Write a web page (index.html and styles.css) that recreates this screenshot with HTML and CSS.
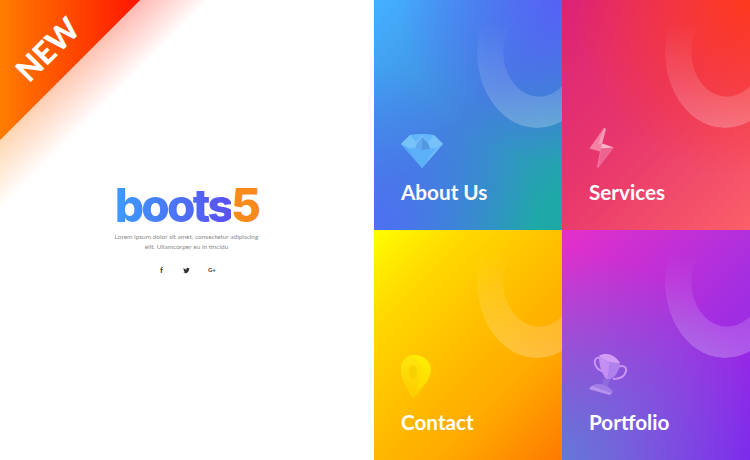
FILE: index.html
```html
<!DOCTYPE html>
<html lang="en">
<head>
  <meta charset="UTF-8">
  <meta name="viewport" content="width=device-width, initial-scale=1.0">
  <title>boots5</title>
  <link rel="stylesheet" href="styles.css">
</head>
<body>
  <div class="page">
    <div class="corner"></div>
    <span class="corner-text">NEW</span>

    <div class="intro">
      <h1 class="logo"><span class="logo-name">boots</span><span class="logo-num">5</span></h1>
      <p class="intro-text">Lorem ipsum dolor sit amet, consectetur adipiscing elit. Ullamcorper eu in tincidu</p>
      <ul class="social">
        <li class="social-f">f</li>
        <li>
          <svg class="social-bird" viewBox="0 0 24 24"><path d="M23 5.1c-.8.4-1.7.6-2.6.7.9-.6 1.6-1.4 2-2.5-.9.5-1.9.9-2.9 1.1A4.6 4.6 0 0 0 11.7 8.6C7.9 8.4 4.500 6.600 2.200 3.800c-1.200 2.100-.6 4.800 1.400 6.100-.7 0-1.400-.2-2-.6 0 2.200 1.500 4.100 3.700 4.600-.7.200-1.400.2-2.100.1.600 1.900 2.300 3.200 4.300 3.200A9.300 9.300 0 0 1 .8 19.100 13 13 0 0 0 20.900 7.500c.9-.6 1.600-1.400 2.100-2.400z"/></svg>
        </li>
        <li class="social-g">G+</li>
      </ul>
    </div>

    <div class="tiles">
      <a class="tile tile-about">
        <span class="ring"></span>
        <svg class="tile-icon" viewBox="0 0 42 34">
          <path d="M9 1c7-1.300 17-1.300 24 0l9 9-21 24L0 10z" fill="#62b6fb"/>
          <path d="M0 10l9-9 6 7 6-7 6 7 6-7 9 9-8 4-13-1-13 1z" fill="#78c2fa"/>
          <path d="M16 9l5-6 6 6 2 6-8 1-7-1z" fill="#62aaf0"/>
          <path d="M21 3l6 6 2 6-8 1z" fill="#5498e4"/>
          <path d="M0 10l8 5 13 19z" fill="#58aaf6"/>
          <path d="M42 10l-8 5-13 19z" fill="#6cbcfa"/>
          <path d="M8 15l13 1 13-1-13 19z" fill="#5cb0f8"/>
        </svg>
        <span class="tile-title">About Us</span>
      </a>
      <a class="tile tile-services">
        <span class="ring"></span>
        <svg class="tile-icon tile-icon-bolt" viewBox="0 0 26 41">
          <path d="M15 0l2 1-4 15 12 4-16 21-1-1 3-16L0 21z" fill="#f67fa4"/>
          <path d="M15 0l2 1-4 15-4 1z" fill="#f79ab8"/>
          <path d="M13 16l12 4-13 1z" fill="#fab4c9"/>
          <path d="M12 21l13-1L9 41z" fill="#ee6490"/>
        </svg>
        <span class="tile-title">Services</span>
      </a>
      <a class="tile tile-contact">
        <span class="ring"></span>
        <svg class="tile-icon tile-icon-pin" viewBox="0 0 30 43">
          <defs>
            <linearGradient id="pin-fade" x1="0" y1="0" x2="0" y2="1">
              <stop offset="0" stop-color="#ffee00"/>
              <stop offset=".6" stop-color="#ffe000"/>
              <stop offset="1" stop-color="#ffcc00"/>
            </linearGradient>
            <linearGradient id="pin-face" x1="0" y1="0" x2="0" y2="1">
              <stop offset="0" stop-color="#ffe40a"/>
              <stop offset="1" stop-color="#ffcb00"/>
            </linearGradient>
          </defs>
          <path d="M13 0c9 0 17 6 17 15 0 8-9 19-18 28C6 35 0 24 0 14 0 5 6 0 13 0z" fill="url(#pin-fade)"/>
          <path d="M9 2c6 0 11 6 11 13 0 7-3 17-8 28C6 35 0 24 0 14 0 7 4 2 9 2z" fill="url(#pin-face)"/>
          <ellipse cx="12" cy="17" rx="4" ry="7" fill="#f9d000"/>
        </svg>
        <span class="tile-title">Contact</span>
      </a>
      <a class="tile tile-portfolio">
        <span class="ring"></span>
        <svg class="tile-icon tile-icon-cup" viewBox="0 0 40 43">
          <path d="M11 5C7 4 5 7 6 11c1 4 5 7 10 8" fill="none" stroke="#c993f4" stroke-width="2"/>
          <path d="M29 14c4-2 9-1 8 4-1 5-6 8-13 8" fill="none" stroke="#c993f4" stroke-width="2"/>
          <path d="M10 3c7-4 15-2 21 7-1 9-5 16-13 17-5-6-8-15-8-24z" fill="#b080ec"/>
          <path d="M10 3c7-4 15-2 21 7-7 0-16-2-21-7z" fill="#d39cf6"/>
          <path d="M10 3c3 3 6 5 10 6 0 7-1 13-2 18-5-6-8-15-8-24z" fill="#c48ff2"/>
          <path d="M15 25l6 2-3 7-5-2z" fill="#8f6adc"/>
          <path d="M10 31c4 0 12 3 14 8l-3 3L0 36c1-3 5-5 10-5z" fill="#a27ce6"/>
          <path d="M0 36l21 6 1-2L3 33z" fill="#b892ee"/>
        </svg>
        <span class="tile-title">Portfolio</span>
      </a>
    </div>
  </div>
</body>
</html>
```

FILE: styles.css
```css
* {
  padding: 0;
  margin: 0;
  box-sizing: border-box;
}
html, body {
  width: 100%;
  height: 100%;
  background: #fff;
  font-family: "Lato", "Open Sans", sans-serif;
  overflow: hidden;
}
ul {
  list-style: none;
}
.page {
  display: flex;
  width: 750px;
  height: 460px;
  position: relative;
}

/* corner ribbon */
.corner {
  position: absolute;
  top: 0;
  left: 0;
  width: 210px;
  height: 210px;
  background: linear-gradient(90deg, #ff7d00 0, #ff1500 140px);
  -webkit-mask-image: linear-gradient(135deg, #000 33.3%, rgba(0,0,0,.3) 33.4%, transparent 50%);
  mask-image: linear-gradient(135deg, #000 33.3%, rgba(0,0,0,.3) 33.4%, transparent 50%);
}
.corner-text {
  position: absolute;
  top: 29px;
  left: 5px;
  width: 84px;
  text-align: center;
  color: #fff;
  font-size: 31px;
  line-height: 40px;
  font-weight: 900;
  transform: rotate(-45deg);
}

/* left column */
.intro {
  width: 374px;
  display: flex;
  flex-direction: column;
  align-items: center;
  justify-content: center;
  padding-bottom: 5px;
  padding-right: 1px;
}
.logo {
  font-family: "Inter", sans-serif;
  font-size: 46px;
  line-height: 50px;
  font-weight: 800;
  letter-spacing: -2.7px;
}
.logo-name {
  background: linear-gradient(90deg, #3d9cff, #5a4ff0);
  -webkit-background-clip: text;
  background-clip: text;
  color: transparent;
}
.logo-num {
  color: #f98a1c;
}
.intro-text {
  width: 150px;
  margin-top: 2px;
  text-align: center;
  font-size: 6.5px;
  line-height: 9.5px;
  color: #8c8c8c;
}
.social {
  display: flex;
  gap: 18px;
  align-items: center;
  margin-top: 14px;
  font-size: 8px;
  color: #444;
}
.social li {
  width: 7px;
  text-align: center;
  line-height: 10px;
}
.social-f {
  font-weight: 900;
}
.social-bird {
  display: block;
  width: 7px;
  height: 7px;
  fill: #333;
}
.social-g {
  font-size: 6px;
  font-weight: 700;
}

/* right grid */
.tiles {
  flex: 1;
  display: grid;
  grid-template-columns: 188px 188px;
  grid-template-rows: 230px 230px;
}
.tile {
  position: relative;
  overflow: hidden;
  display: flex;
  flex-direction: column;
  justify-content: flex-end;
  align-items: flex-start;
  padding: 0 0 25px 27px;
  color: #fff;
}
.tile-about {
  background:
    radial-gradient(circle at 100% 0, #5661f6 0, rgba(86,97,246,0) 55%),
    radial-gradient(circle at 0 100%, #4e6ff2 0, rgba(78,111,242,0) 55%),
    linear-gradient(135deg, #44b0ff 0, #3f87d8 50%, #1ea9a6 92%);
}
.tile-services {
  background:
    radial-gradient(circle at 100% 0, #ff3a1e 0, rgba(255,58,30,0) 60%),
    linear-gradient(135deg, #dc2277 0, #e8386c 50%, #fb6068 100%);
}
.tile-contact {
  background: linear-gradient(135deg, #ffff00 0, #ffdc00 20%, #ffc400 42%, #ffa800 72%, #ff7a00 100%);
}
.tile-portfolio {
  background:
    radial-gradient(circle at 0 100%, #6478d8 0, rgba(100,120,216,0) 70%),
    linear-gradient(135deg, #e530c8 0, #a62fe0 55%, #7f22ee 100%);
}
.ring {
  position: absolute;
  top: -24px;
  left: 103px;
  width: 120px;
  height: 152px;
  border-radius: 50%;
  background: linear-gradient(180deg, rgba(255,255,255,0) 30%, rgba(255,255,255,.24) 100%);
  -webkit-mask-image: radial-gradient(ellipse 36px 45px at 62px 76px, transparent 98%, #000 100%);
  mask-image: radial-gradient(ellipse 36px 45px at 62px 76px, transparent 98%, #000 100%);
}
.tile-icon {
  display: block;
  width: 42px;
  height: 34px;
  margin-bottom: 11px;
  filter: blur(.4px);
}
.tile-icon-bolt {
  width: 26px;
  height: 40px;
  margin-bottom: 11px;
}
.tile-icon-pin {
  width: 30px;
  height: 43px;
  margin-bottom: 11px;
}
.tile-icon-cup {
  width: 40px;
  height: 43px;
  margin-bottom: 13px;
}
.tile-title {
  position: relative;
  font-size: 20.7px;
  line-height: 26px;
  font-weight: 700;
}
```
